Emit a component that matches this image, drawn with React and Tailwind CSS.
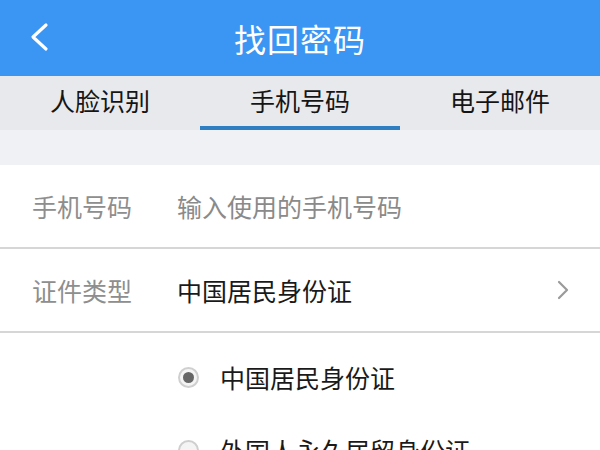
export default function App() {
  const tabs = ['人脸识别', '手机号码', '电子邮件'];
  const active = 1;

  return (
    <div className="w-[600px] h-[450px] overflow-hidden bg-white font-['Noto_Sans_CJK_SC',sans-serif]">
      {/* header */}
      <div className="relative h-[76px] bg-[#3b95f3] flex items-center justify-center">
        <svg className="absolute left-[28px] top-[22px]" width="22" height="30" viewBox="0 0 22 30" fill="none">
          <path d="M18 3 L5 15 L18 27" stroke="white" strokeWidth="3.2" strokeLinecap="round" strokeLinejoin="round" />
        </svg>
        <h1 className="text-white text-[32px] leading-none tracking-[1px]">找回密码</h1>
      </div>

      {/* tabs */}
      <div className="grid grid-cols-3 h-[54px] bg-[#e8e9ec]">
        {tabs.map((t, i) => (
          <div key={t} className="relative flex items-center justify-center">
            <span className="text-[25px] leading-none text-[#151515] -mt-[6px]">{t}</span>
            {i === active && (
              <div className="absolute bottom-[0px] left-0 right-0 h-[4px] bg-[#2f7ec2]" />
            )}
          </div>
        ))}
      </div>

      <div className="h-[35px] bg-[#f0f1f4]" />

      {/* form rows */}
      <div className="flex items-center h-[84px] border-b-2 border-[#d6d6d6] pl-[32px]">
        <span className="w-[145px] text-[25px] text-[#8e8e8e] leading-none">手机号码</span>
        <span className="text-[25px] text-[#8a8a8a] leading-none">输入使用的手机号码</span>
      </div>
      <div className="flex items-center h-[84px] border-b-2 border-[#d6d6d6] pl-[32px] pr-[30px]">
        <span className="w-[145px] text-[25px] text-[#8e8e8e] leading-none">证件类型</span>
        <span className="flex-1 text-[25px] text-[#1a1a1a] leading-none">中国居民身份证</span>
        <svg width="14" height="22" viewBox="0 0 14 22" fill="none">
          <path d="M3 3 L11 11 L3 19" stroke="#9a9a9a" strokeWidth="2.2" strokeLinecap="round" strokeLinejoin="round" />
        </svg>
      </div>

      {/* radio options */}
      <div className="pt-[8px]">
        {['中国居民身份证', '外国人永久居留身份证'].map((o, i) => (
          <div key={o} className="flex items-center h-[73px] pl-[178px] gap-[21px]">
            <span className="w-[21px] h-[21px] rounded-full border-2 border-[#cfcfcf] bg-[#f4f4f4] flex items-center justify-center">
              {i === 0 && <span className="w-[11px] h-[11px] rounded-full bg-[#666]" />}
            </span>
            <span className="text-[25px] text-[#1a1a1a] leading-none">{o}</span>
          </div>
        ))}
      </div>
    </div>
  );
}
